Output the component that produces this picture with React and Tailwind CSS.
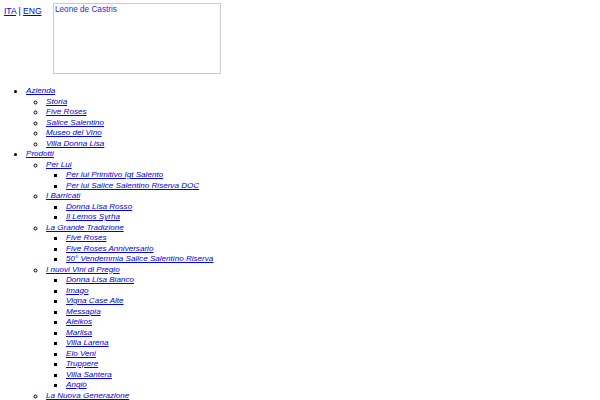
const azienda = ["Storia", "Five Roses", "Salice Salentino", "Museo del Vino", "Villa Donna Lisa"]

const prodotti = [
  { name: "Per Lui", items: ["Per lui Primitivo Igt Salento", "Per lui Salice Salentino Riserva DOC"] },
  { name: "I Barricati", items: ["Donna Lisa Rosso", "Il Lemos Syrha"] },
  {
    name: "La Grande Tradizione",
    items: ["Five Roses", "Five Roses Anniversario", "50° Vendemmia Salice Salentino Riserva"],
  },
  {
    name: "I nuovi Vini di Pregio",
    items: [
      "Donna Lisa Bianco",
      "Imago",
      "Vigna Case Alte",
      "Messapia",
      "Aleikos",
      "Marlisa",
      "Villa Larena",
      "Elo Veni",
      "Truppere",
      "Villa Santera",
      "Angiò",
    ],
  },
  { name: "La Nuova Generazione", items: [] },
]

// marker keeps the 9px size, link text is a bit narrower
function Link({ children }) {
  return (
    <a href="#" className="inline-block align-top text-[8.1px] leading-[10.5px] italic text-[#0000ee] underline">
      {children}
    </a>
  )
}

export default function App() {
  return (
    <div className="h-[400px] w-[600px] overflow-hidden bg-white font-['Liberation_Sans',Arial,sans-serif] text-[9px] leading-[10.5px] text-black">
      <div className="flex pl-[4px] pt-[3px]">
        <div className="w-[49px] pt-[3px] text-[8.5px]">
          <a href="#" className="text-[#0000ee] underline">ITA</a> |{" "}
          <a href="#" className="text-[#0000ee] underline">ENG</a>
        </div>
        <div className="h-[71px] w-[168px] border border-[#cccccc] pl-[1px] pt-[1px] text-[8.2px] text-[#2a2acc]">
          Leone de Castris
        </div>
      </div>

      <ul className="mt-[12px] list-[disc] pl-[26px]">
        <li>
          <Link>Azienda</Link>
          <ul className="list-[circle] pl-[20px]">
            {azienda.map((a) => (
              <li key={a}>
                <Link>{a}</Link>
              </li>
            ))}
          </ul>
        </li>
        <li>
          <Link>Prodotti</Link>
          <ul className="list-[circle] pl-[20px]">
            {prodotti.map((p) => (
              <li key={p.name}>
                <Link>{p.name}</Link>
                {p.items.length > 0 && (
                  <ul className="list-[square] pl-[20px]">
                    {p.items.map((i) => (
                      <li key={i}>
                        <Link>{i}</Link>
                      </li>
                    ))}
                  </ul>
                )}
              </li>
            ))}
          </ul>
        </li>
      </ul>
    </div>
  )
}
